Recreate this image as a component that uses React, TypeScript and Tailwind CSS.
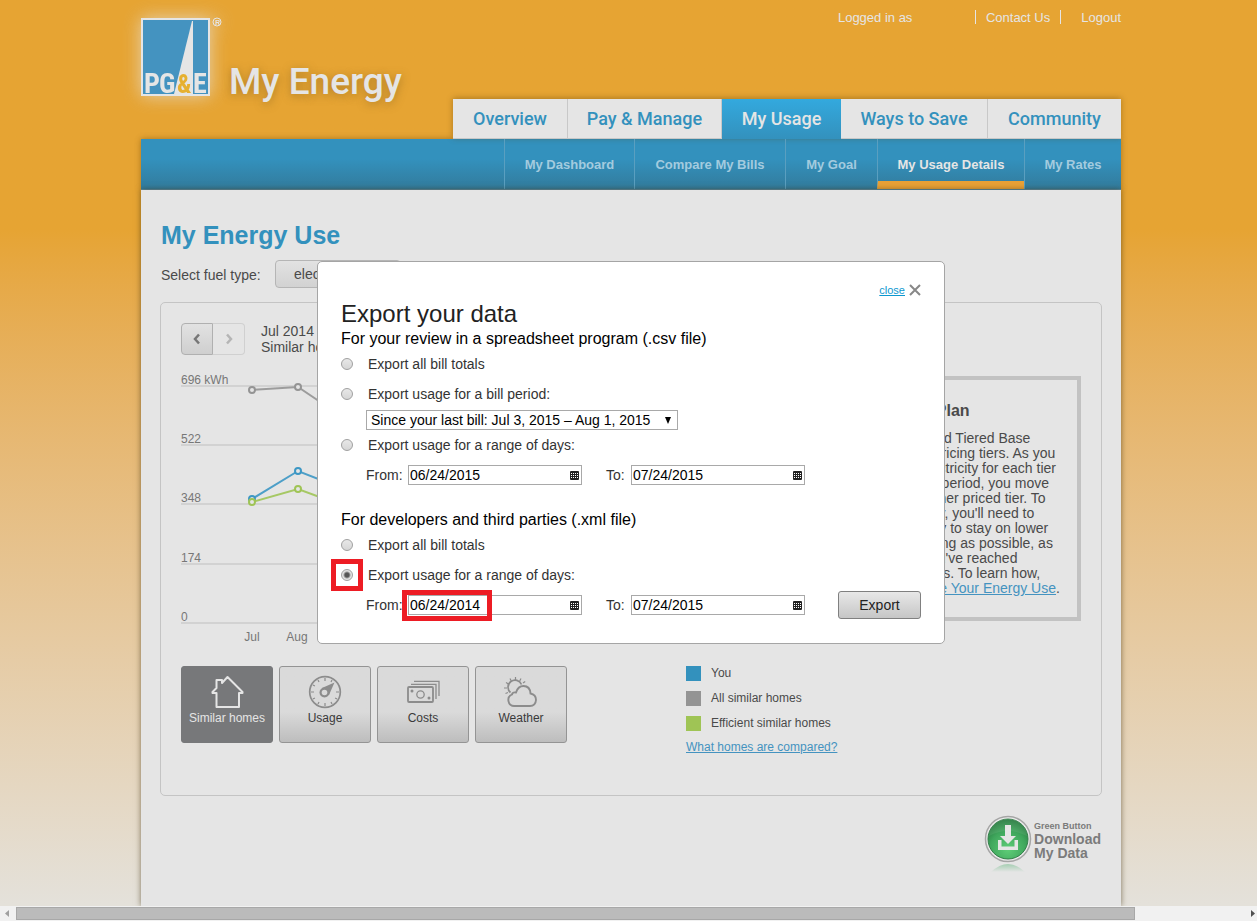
import { useState } from "react";

const din = "font-['Roboto','Liberation_Sans',sans-serif]";

function Logo() {
  return (
    <svg width="84" height="90" viewBox="0 0 84 90" role="img" aria-label="PG&E" className="overflow-visible drop-shadow-[0_0_9px_rgba(229,229,229,0.7)]">
      <rect x="0" y="2" width="69" height="78" fill="#e5e5e5" />
      <rect x="2" y="4" width="65" height="74" fill="#4493c0" />
      <path d="M51 5 L52 5 L52 78 L33 78 Z" fill="#e5e5e5" />
      <g fontFamily="'Liberation Sans Narrow','Roboto Condensed','Liberation Sans',sans-serif" fontWeight="700" fill="#e5e5e5" fontSize="28">
        <text x="3" y="77">P</text>
        <text x="18" y="77">G</text>
        <text x="52" y="77">E</text>
        <text x="36" y="77" fontSize="25" fill="#e6b030">&amp;</text>
      </g>
      <circle cx="76" cy="6" r="4" fill="none" stroke="#e5e5e5" />
      <text x="74" y="9" fontSize="7" fontWeight="700" fontFamily="'Liberation Sans',sans-serif" fill="#e5e5e5">R</text>
    </svg>
  );
}

function HomeIcon() {
  return (
    <svg width="34" height="34" viewBox="0 0 34 34" fill="none" stroke="#e5e5e5" strokeWidth="2" strokeLinejoin="round" aria-hidden="true">
      <path d="M6.500 18 H2.500 V17 L6.500 13 V5 H12 V8 L17.500 2 L32.500 17 V18 H29 V32 H6.500 Z" />
    </svg>
  );
}

function GaugeIcon() {
  return (
    <svg width="34" height="34" viewBox="0 0 34 34" fill="none" stroke="#8c8c8c" aria-hidden="true">
      <circle cx="17" cy="17" r="15.300" strokeWidth="1.700" />
      <path d="M17 3v3M17 28v3M3 17h3M28 17h3M10 4.900l1 2M24 4.900l-1 2M4.900 10l2 1M4.900 24l2-1M10 29.100l1-2M24 29.100l-1-2M29.100 24l-2-1" strokeWidth="1.200" />
      <circle cx="16.500" cy="17.500" r="5" fill="#8c8c8c" stroke="none" />
      <path d="M26.500 7.500 L14 13 L21 20 Z" fill="#8c8c8c" stroke="none" />
      <circle cx="16.500" cy="17.500" r="2.800" fill="#dadada" stroke="none" />
    </svg>
  );
}

function CashIcon() {
  return (
    <svg width="34" height="34" viewBox="0 0 34 34" fill="none" stroke="#8c8c8c" aria-hidden="true">
      <rect x="2" y="12" width="25" height="15" rx="1" strokeWidth="1.800" />
      <circle cx="14.500" cy="19.500" r="3.700" strokeWidth="1.300" />
      <circle cx="6" cy="16" r="1.500" fill="#8c8c8c" stroke="none" />
      <circle cx="23" cy="23" r="1.500" fill="#8c8c8c" stroke="none" />
      <path d="M5 9.300 H30 V24 M8 6.300 H33 V21" strokeWidth="1.300" />
    </svg>
  );
}

function WeatherIcon() {
  return (
    <svg width="34" height="34" viewBox="0 0 34 34" fill="none" stroke="#8c8c8c" aria-hidden="true">
      <path d="M10 31 A6 6 0 0 1 8 19.500 Q8.500 17 12 17.500 Q14 11 19.500 11 Q26 11 26.500 18.500 Q32 19.500 32 25 Q31.500 31 26 31 Z" strokeWidth="1.900" />
      <path d="M6.500 17.500 A7 7 0 1 1 17.500 9.500" strokeWidth="1.700" />
      <path d="M11.500 2v3M6 3.500l1.300 2.600M17 3.500l-1.300 2.600M2 7.500l2.500 1.500M0 13h3M1.500 18.500l2.500-1M19 8l2.200-1.600" strokeWidth="1.200" />
    </svg>
  );
}

function CalendarIcon() {
  return (
    <svg width="9" height="9" viewBox="0 0 9 9" aria-hidden="true">
      <rect width="9" height="9" rx="1" fill="#222" />
      <path d="M1 2h1v1H1zM3 2h1v1H3zM5 2h1v1H5zM7 2h1v1H7zM1 4h1v1H1zM3 4h1v1H3zM5 4h1v1H5zM7 4h1v1H7zM1 6h1v1H1zM3 6h1v1H3zM5 6h1v1H5zM7 6h1v1H7z" fill="#fff" />
    </svg>
  );
}

function DownloadBadge() {
  return (
    <svg width="48" height="60" viewBox="0 0 48 60" aria-hidden="true">
      <defs>
        <radialGradient id="green" cx="50%" cy="75%" r="75%">
          <stop offset="0" stopColor="#5fce78" />
          <stop offset="0.6" stopColor="#3fa65c" />
          <stop offset="1" stopColor="#24773c" />
        </radialGradient>
        <linearGradient id="reflection" x1="0" y1="0" x2="0" y2="1">
          <stop offset="0" stopColor="#a5ceb2" />
          <stop offset="1" stopColor="#e5e5e5" />
        </linearGradient>
      </defs>
      <path d="M7 58 Q24 42 41 58 Z" fill="url(#reflection)" />
      <circle cx="24" cy="25" r="22.500" fill="#e9e9e9" stroke="#a5a5a5" strokeWidth="1.500" />
      <circle cx="24" cy="25" r="20" fill="url(#green)" stroke="#34804a" />
      <path d="M5 22 Q24 12 43 22 A19 19 0 0 0 5 22Z" fill="#fff" opacity="0.080" />
      <path d="M21 11h6v11h5l-8 8-8-8h5z" fill="#e5e5e5" />
      <path d="M14 26h3.500v6.500h13V26H34v10H14z" fill="#e5e5e5" />
    </svg>
  );
}

const tabs = ["Overview", "Pay & Manage", "My Usage", "Ways to Save", "Community"];
const subTabs = ["My Dashboard", "Compare My Bills", "My Goal", "My Usage Details", "My Rates"];

function Navigation() {
  return (
    <nav>
      <div className="flex justify-end">
        <div className="grid grid-cols-[115px_154px_119px_147px_133px] shadow-[0_-1px_6px_rgba(90,60,0,0.4)]">
          {tabs.map((tab) => (
            <a
              key={tab}
              href="#"
              className={`${din} h-10 text-center text-lg leading-10 font-medium ${
                tab === "My Usage"
                  ? "bg-linear-to-b from-[#33a9de] to-[#3391bd] text-[#e5e5e5]"
                  : "border-r border-b border-[#c8c8c8] bg-[#e5e5e5] text-[#3391bd] last:border-r-0"
              }`}
            >
              {tab}
            </a>
          ))}
        </div>
      </div>
      <div className="flex justify-end border-b border-[#5a8ea8] bg-linear-to-b from-[#3391bd] from-40% to-[#327b9c] shadow-[0_0_6px_rgba(90,60,0,0.45)]">
        <div className="grid grid-cols-[130px_151px_92px_147px_97px]">
          {subTabs.map((tab) => (
            <a
              key={tab}
              href="#"
              className={`h-[50px] border-l border-[#5a9fc0] text-center text-[13px] leading-[52px] font-bold ${
                tab === "My Usage Details" ? "border-b-8 border-b-[#e9a136] text-[#e5e5e5]" : "text-[#a3cbdf]"
              }`}
            >
              {tab}
            </a>
          ))}
        </div>
      </div>
    </nav>
  );
}

const gridLines = [
  { y: 16, label: "696 kWh" },
  { y: 75, label: "522" },
  { y: 134, label: "348" },
  { y: 194, label: "174" },
  { y: 253, label: "0" },
];

const series = [
  { name: "All similar homes", color: "#949494", points: [[71, 20], [117, 17], [163, 48]] },
  { name: "You", color: "#3c97c4", points: [[71, 129], [117, 101], [163, 119]] },
  { name: "Efficient similar homes", color: "#9fc455", points: [[71, 132], [117, 119], [163, 136]] },
];

function UsageChart() {
  return (
    <svg width="640" height="281" viewBox="0 0 640 281" className="block max-w-full" role="img" aria-label="Monthly usage">
      {gridLines.map((line) => (
        <g key={line.label}>
          <rect x="0" y={line.y - 1} width="640" height="2" fill="#d2d2d2" />
          <text x="0" y={line.y - 2} fontSize="12" fill="#777">{line.label}</text>
        </g>
      ))}
      {series.map((s) => (
        <g key={s.name} stroke={s.color} strokeWidth="2" fill="none">
          <polyline points={s.points.map((p) => p.join(",")).join(" ")} opacity="0.9" />
          {s.points.map(([x, y]) => (
            <circle key={x} cx={x} cy={y} r="3" fill="#e5e5e5" />
          ))}
        </g>
      ))}
      <g fontSize="12" fill="#777" textAnchor="middle">
        <text x="71" y="271">Jul</text>
        <text x="116" y="271">Aug</text>
      </g>
    </svg>
  );
}

const planLines = [
  "Our standard Tiered Base",
  "plan uses pricing tiers. As you",
  "use the electricity for each tier",
  "for a billing period, you move",
  "into the higher priced tier. To",
  "save money, you'll need to",
  "save energy to stay on lower",
  "prices as long as possible, as",
  "soon as you've reached",
  "the next tiers. To learn how,",
];

function PlanBox() {
  return (
    <aside className="mt-[53px] w-[231px] shrink-0 self-start border-4 border-[#c2c2c2] px-4 pt-[21px] pb-[21px] text-[#4a4a4a]">
      <h2 className="text-base leading-5 font-bold">My Rate Plan</h2>
      <p className="mt-2.5 text-sm leading-[15px] whitespace-nowrap">
        {planLines.map((line) => (
          <span key={line} className="block">{line}</span>
        ))}
        see <a href="#" className="text-[#4493c0] underline">Manage Your Energy Use</a>.
      </p>
    </aside>
  );
}

const views = [
  { label: "Similar homes", icon: <HomeIcon /> },
  { label: "Usage", icon: <GaugeIcon /> },
  { label: "Costs", icon: <CashIcon /> },
  { label: "Weather", icon: <WeatherIcon /> },
];

const legend = [
  { label: "You", swatch: "bg-[#3391bd]" },
  { label: "All similar homes", swatch: "bg-[#949494]" },
  { label: "Efficient similar homes", swatch: "bg-[#9fc455]" },
];

function EnergyUse() {
  return (
    <main className="flex-1 bg-[#e5e5e5] px-5 pt-[30px] pb-8 text-sm text-[#4a4a4a] shadow-[0_0_6px_rgba(60,45,10,0.6)]">
      <h1 className="text-[25px] leading-[30px] font-bold text-[#3391bd]">My Energy Use</h1>
      <div className="mt-2.5 flex items-center">
        <span className="w-[114px] pt-0.5">Select fuel type:</span>
        <button type="button" className="h-7 w-[126px] rounded-sm border border-[#b5b5b5] bg-linear-to-b from-[#e2e2e2] to-[#d2d2d2] pl-[18px] text-left">
          electricity
        </button>
      </div>
      <section className="-mx-px mt-3.5 rounded-[5px] border border-[#c4c4c4] px-5 pt-5 pb-10">
        <div className="flex">
          <div className="min-w-0 flex-1">
            <div className="flex h-8 items-center">
              <button type="button" aria-label="Previous" className="flex h-8 w-8 items-center justify-center rounded-l-sm border border-[#b0b0b0] bg-linear-to-b from-[#e2e2e2] to-[#cfcfcf]">
                <svg width="8" height="12" viewBox="0 0 8 12" fill="none" stroke="#777" strokeWidth="2.500"><path d="M6 1.500 L2 6 L6 10.500" /></svg>
              </button>
              <button type="button" aria-label="Next" className="flex h-8 w-8 items-center justify-center rounded-r-sm border border-l-0 border-[#d0d0d0]">
                <svg width="8" height="12" viewBox="0 0 8 12" fill="none" stroke="#b5b5b5" strokeWidth="2.500"><path d="M2 1.500 L6 6 L2 10.500" /></svg>
              </button>
              <p className="ml-4 leading-4">
                Jul 2014
                <br />
                Similar homes
              </p>
            </div>
            <div className="mt-[15px]">
              <UsageChart />
            </div>
          </div>
          <PlanBox />
        </div>
        <div className="mt-[15px] flex">
          <div className="flex w-[505px] gap-1.5 text-xs">
            {views.map((view, i) => (
              <button
                key={view.label}
                type="button"
                className={`flex h-[77px] w-[92px] flex-col items-center rounded-[3px] border pt-2 leading-[18px] ${
                  i === 0
                    ? "border-[#77787a] bg-[#77787a] text-[#e5e5e5]"
                    : "border-[#949494] bg-linear-to-b from-[#dadada] from-60% to-[#bdbdbd] text-[#3a3a3a]"
                }`}
              >
                {view.icon}
                {view.label}
              </button>
            ))}
          </div>
          <div className="text-xs">
            <ul className="flex flex-col gap-2.5">
              {legend.map((item) => (
                <li key={item.label} className="flex items-center leading-[15px]">
                  <span className={`mr-2.5 h-[15px] w-[15px] ${item.swatch}`} />
                  {item.label}
                </li>
              ))}
            </ul>
            <a href="#" className="mt-2 block leading-4 text-[#4493c0] underline">What homes are compared?</a>
          </div>
        </div>
      </section>
      <a href="#" className="mt-[18px] flex justify-end font-bold text-[#7b7b7b]">
        <DownloadBadge />
        <span className="mt-[6px] ml-0.5 leading-[14px]">
          <span className="block text-[9px] leading-3">Green Button</span>
          Download
          <br />
          My Data
        </span>
      </a>
    </main>
  );
}

type Mode = "csv-all" | "csv-bill" | "csv-range" | "xml-all" | "xml-range";

function Option(props: { value: Mode; label: string; mode: Mode; onPick: (m: Mode) => void; marked?: boolean }) {
  return (
    <label className="flex h-[30px] items-center gap-[15px]">
      <span className="relative flex h-3 w-3">
        <input
          type="radio"
          name="export"
          checked={props.mode === props.value}
          onChange={() => props.onPick(props.value)}
          className="h-3 w-3 appearance-none rounded-full border border-[#a0a0a0] bg-linear-to-b from-[#e8e8e8] to-[#d6d6d6] checked:bg-[radial-gradient(circle,#555_0_2px,#e2e2e2_4px)]"
        />
        {props.marked && <span className="pointer-events-none absolute -inset-2.5 border-5 border-[#ed1c24]" />}
      </span>
      {props.label}
    </label>
  );
}

function DateField(props: { id: string; label: string; initial: string; labelWidth: string; marked?: boolean }) {
  return (
    <div className="flex items-center">
      <label htmlFor={props.id} className={props.labelWidth}>{props.label}</label>
      <div className="relative flex h-5 w-[174px] items-center border border-[#a9a9a9] bg-white pr-0.5">
        <input id={props.id} type="text" defaultValue={props.initial} className="min-w-0 flex-1 pl-px text-sm leading-[18px] text-black outline-none" />
        <button type="button" aria-label="Open calendar"><CalendarIcon /></button>
        {props.marked && <span className="pointer-events-none absolute -top-1.5 -left-[7px] h-[31px] w-[90px] border-5 border-[#ed1c24]" />}
      </div>
    </div>
  );
}

function ExportDialog() {
  const [mode, setMode] = useState<Mode>("xml-range");
  return (
    <form
      role="dialog"
      aria-labelledby="export-title"
      className="absolute top-[261px] left-1/2 w-[628px] -translate-x-1/2 rounded-[5px] border border-[#a5a5a5] bg-white px-[23px] pt-[18px] pb-[23px] text-sm text-[#333]"
    >
      <div className="flex h-5 items-center justify-end gap-1">
        <a href="#" className="pt-px text-[11px] text-[#0d98d0] underline">close</a>
        <svg width="12" height="12" viewBox="0 0 12 12" stroke="#888" strokeWidth="2" aria-hidden="true"><path d="M1 1 L11 11 M11 1 L1 11" /></svg>
      </div>
      <h2 id="export-title" className="text-2xl leading-7 text-[#222]">Export your data</h2>
      <h3 className="mt-px text-base leading-5 text-black">For your review in a spreadsheet program (.csv file)</h3>
      <Option value="csv-all" label="Export all bill totals" mode={mode} onPick={setMode} />
      <Option value="csv-bill" label="Export usage for a bill period:" mode={mode} onPick={setMode} />
      <div className="relative mt-px ml-[25px] flex w-[312px] items-center">
        <select aria-label="Bill period" className="h-5 w-full appearance-none border border-[#a9a9a9] bg-white pl-1 text-sm leading-[18px] text-black">
          <option>Since your last bill: Jul 3, 2015 – Aug 1, 2015</option>
        </select>
        <svg width="6" height="7" viewBox="0 0 6 7" className="pointer-events-none absolute right-[7px]" aria-hidden="true"><path d="M0 0h6L3 7z" fill="#000" /></svg>
      </div>
      <Option value="csv-range" label="Export usage for a range of days:" mode={mode} onPick={setMode} />
      <div className="ml-[25px] flex h-[30px] items-center gap-6">
        <DateField id="csv-from" label="From:" initial="06/24/2015" labelWidth="w-[42px]" />
        <DateField id="csv-to" label="To:" initial="07/24/2015" labelWidth="w-[25px]" />
      </div>
      <h3 className="mt-5 text-base leading-5 text-black">For developers and third parties (.xml file)</h3>
      <Option value="xml-all" label="Export all bill totals" mode={mode} onPick={setMode} />
      <Option value="xml-range" label="Export usage for a range of days:" mode={mode} onPick={setMode} marked />
      <div className="ml-[25px] flex h-[30px] items-center gap-6">
        <DateField id="xml-from" label="From:" initial="06/24/2014" labelWidth="w-[42px]" marked />
        <DateField id="xml-to" label="To:" initial="07/24/2015" labelWidth="w-[25px]" />
        <button type="button" className="ml-auto h-7 w-[83px] rounded-[3px] border border-[#808080] bg-linear-to-b from-[#e8e8e8] to-[#c6c6c6] text-sm text-[#222]">
          Export
        </button>
      </div>
    </form>
  );
}

export default function App() {
  return (
    <div className="flex min-h-screen flex-col bg-linear-to-b from-[#e6a433] from-25% to-[#e4e1da] to-98% font-['Liberation_Sans',Arial,sans-serif]">
      <div className="flex flex-1 flex-col overflow-hidden pl-[5px]">
        <div className="relative mx-auto flex w-full max-w-[980px] flex-1 flex-col">
          <header className="flex h-[99px] justify-between text-[#e5e5e5]">
            <div className="flex items-start pt-4">
              <Logo />
              <span className={`${din} ml-1 pt-10 text-[37px] leading-[52px] font-medium [text-shadow:0_2px_8px_rgba(120,90,30,0.5)]`}>My Energy</span>
            </div>
            <div className="flex items-start pt-2.5 text-[13px] leading-[15px]">
              <span className="w-[137px]">Logged in as</span>
              <a href="#" className="h-3.5 border-x border-[#e5e5e5] px-2.5">Contact Us</a>
              <a href="#" className="ml-5">Logout</a>
            </div>
          </header>
          <Navigation />
          <EnergyUse />
          <ExportDialog />
        </div>
      </div>
      <div className="flex h-[15px] items-center bg-[#f1f1f1]">
        <svg width="16" height="15" viewBox="0 0 16 15" aria-hidden="true"><path d="M9 4v7L5 7.500z" fill="#a0a0a0" /></svg>
        <div className="mr-[106px] h-[13px] flex-1 border border-[#a8a8a8] bg-[#bbb]" />
        <svg width="16" height="15" viewBox="0 0 16 15" aria-hidden="true"><path d="M10 4v7l4-3.500z" fill="#505050" /></svg>
      </div>
    </div>
  );
}
